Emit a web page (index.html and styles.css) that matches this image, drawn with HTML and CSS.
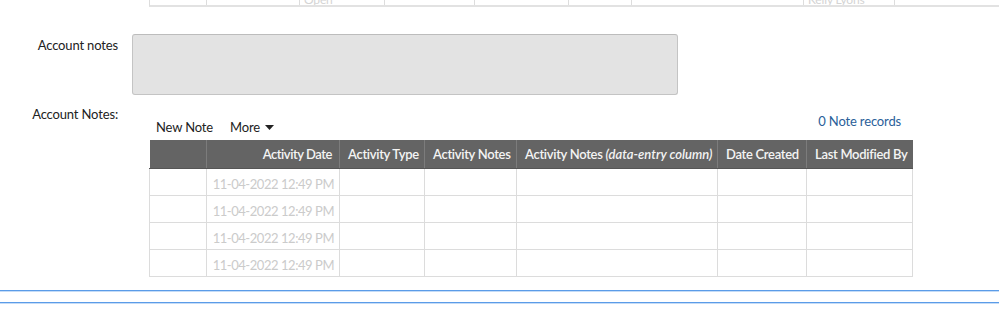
FILE: index.html
```html
<!DOCTYPE html>
<html lang="en">
<head>
  <meta charset="utf-8">
  <link rel="stylesheet" href="styles.css">
</head>
<body>

  <div class="prev-grid">
    <div class="prev-cell w57"></div>
    <div class="prev-cell w93"></div>
    <div class="prev-cell w85"><span>Open</span></div>
    <div class="prev-cell w90"></div>
    <div class="prev-cell w94"></div>
    <div class="prev-cell w63"></div>
    <div class="prev-cell w172"></div>
    <div class="prev-cell w91"><span>Kelly Lyons</span></div>
    <div class="prev-cell w104"></div>
  </div>

  <div class="field-row notes-field">
    <label class="field-label" for="acctNotes">Account notes</label>
    <textarea id="acctNotes" class="notes-box" readonly></textarea>
  </div>

  <div class="field-row grid-field">
    <div class="field-label">Account Notes:</div>
    <div class="grid-wrap">
      <div class="toolbar">
        <div class="toolbar-left">
          <a class="tool-link">New Note</a>
          <a class="tool-link">More
            <svg class="caret" width="9" height="5" viewBox="0 0 9 5"><path d="M0 0h9L4.5 5z" fill="#222"/></svg>
          </a>
        </div>
        <a class="records">0 Note records</a>
      </div>

      <table class="notes-table">
        <colgroup>
          <col style="width:57px">
          <col style="width:133px">
          <col style="width:85px">
          <col style="width:92px">
          <col style="width:201px">
          <col style="width:89px">
          <col style="width:106px">
        </colgroup>
        <thead>
          <tr>
            <th></th>
            <th class="right">Activity Date</th>
            <th>Activity Type</th>
            <th>Activity Notes</th>
            <th>Activity Notes <em>(data-entry column)</em></th>
            <th>Date Created</th>
            <th>Last Modified By</th>
          </tr>
        </thead>
        <tbody>
          <tr><td></td><td class="date">11-04-2022 12:49 PM</td><td></td><td></td><td></td><td></td><td></td></tr>
          <tr><td></td><td class="date">11-04-2022 12:49 PM</td><td></td><td></td><td></td><td></td><td></td></tr>
          <tr><td></td><td class="date">11-04-2022 12:49 PM</td><td></td><td></td><td></td><td></td><td></td></tr>
          <tr><td></td><td class="date">11-04-2022 12:49 PM</td><td></td><td></td><td></td><td></td><td></td></tr>
        </tbody>
      </table>
    </div>
  </div>

  <div class="rule"></div>
  <div class="rule second"></div>

</body>
</html>
```

FILE: styles.css
```css
body {
  margin: 0;
  font-family: Lato, "Open Sans", sans-serif;
  font-size: 13px;
  letter-spacing: -0.15px;
  color: #222;
  background-color: #fff;
}

/* bottom edge of the grid above, scrolled mostly out of view */
.prev-grid {
  display: flex;
  margin-left: 149px;
  width: 849px;
  height: 5px;
  border-left: 1px solid #ddd;
  border-bottom: 2px solid #e2e2e2;
  overflow: hidden;
}

.prev-cell {
  flex: none;
  height: 5px;
  border-right: 1px solid #ddd;
  box-sizing: border-box;
  display: flex;
  align-items: flex-end;
  overflow: hidden;
}

.prev-cell span {
  color: #d4d4d4;
  font-size: 12px;
  line-height: 13px;
  padding-left: 4px;
  margin-bottom: -1px;
}

.w57 { width: 57px; }
.w93 { width: 93px; }
.w85 { width: 85px; }
.w90 { width: 90px; }
.w94 { width: 94px; }
.w63 { width: 63px; }
.w172 { width: 172px; }
.w91 { width: 91px; }
.w104 { width: 104px; border-right: none; }

.field-row {
  display: grid;
  grid-template-columns: 118px 1fr;
  column-gap: 14px;
}

.field-label {
  text-align: right;
  line-height: 16px;
  color: #222;
}

.notes-field {
  margin-top: 27px;
}

.notes-field .field-label {
  padding-top: 3px;
}

.notes-box {
  width: 546px;
  height: 61px;
  box-sizing: border-box;
  background-color: #e3e3e3;
  border: 1px solid #c4c4c4;
  border-top-color: #bcbcbc;
  border-radius: 3px;
  resize: none;
  margin: 0;
  font-family: inherit;
}

.grid-field {
  margin-top: 10px;
}

.grid-field .field-label {
  padding-top: 1px;
}

.grid-wrap {
  width: 764px;
  margin-left: 17px;
}

.toolbar {
  display: flex;
  justify-content: space-between;
  height: 35px;
}

.toolbar-left {
  display: flex;
  gap: 17px;
  align-self: flex-end;
  padding-left: 7px;
  padding-bottom: 5px;
}

.tool-link {
  color: #222;
  line-height: 16px;
  cursor: pointer;
}

.caret {
  margin-left: 2px;
  vertical-align: 2px;
}

.records {
  color: #2a6099;
  line-height: 16px;
  padding-top: 8px;
  padding-right: 12px;
  cursor: pointer;
}

.notes-table {
  border-collapse: collapse;
  table-layout: fixed;
  width: 764px;
  font-size: 13px;
  letter-spacing: -0.45px;
}

.notes-table th {
  background-color: #646464;
  color: #f4f4f4;
  font-weight: 600;
  height: 28px;
  padding: 0 6px 0 8px;
  text-align: left;
  white-space: nowrap;
  letter-spacing: -0.3px;
  border-left: 1px solid #7c7c7c;
  border-bottom: 1px solid #555;
}

.notes-table th em {
  letter-spacing: 0;
}

.notes-table th:first-child {
  border-left: none;
}

.notes-table th.right {
  text-align: right;
  padding-right: 7px;
  letter-spacing: -0.45px;
}

.notes-table td {
  height: 27px;
  padding: 0 5px;
  border: 1px solid #dcdcdc;
  vertical-align: bottom;
  padding-bottom: 3px;
  box-sizing: border-box;
}

.notes-table td.date {
  text-align: right;
  color: #cbcbcb;
  white-space: nowrap;
}

.rule {
  margin-top: 13px;
  border-top: 1px solid #5b9ce8;
  border-bottom: 1px solid #c5dcf7;
}

.rule.second {
  margin-top: 10px;
}
```
